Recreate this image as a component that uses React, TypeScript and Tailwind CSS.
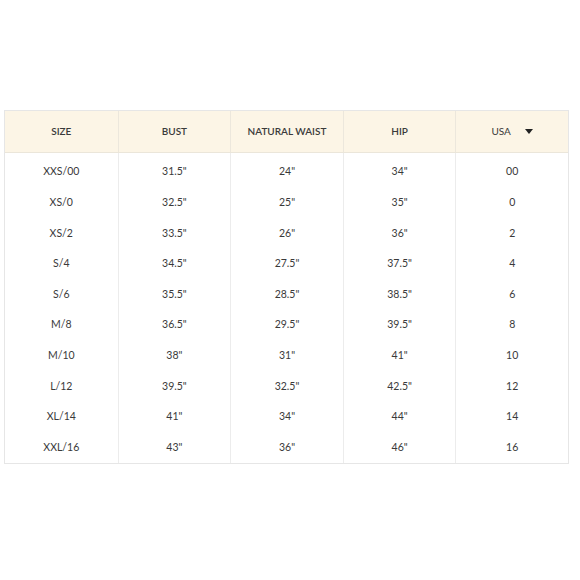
const rows = [
  ['XXS/00', '31.5"', '24"', '34"', '00'],
  ['XS/0', '32.5"', '25"', '35"', '0'],
  ['XS/2', '33.5"', '26"', '36"', '2'],
  ['S/4', '34.5"', '27.5"', '37.5"', '4'],
  ['S/6', '35.5"', '28.5"', '38.5"', '6'],
  ['M/8', '36.5"', '29.5"', '39.5"', '8'],
  ['M/10', '38"', '31"', '41"', '10'],
  ['L/12', '39.5"', '32.5"', '42.5"', '12'],
  ['XL/14', '41"', '34"', '44"', '14'],
  ['XXL/16', '43"', '36"', '46"', '16'],
]

const headers = ['SIZE', 'BUST', 'NATURAL WAIST', 'HIP']

export default function App() {
  return (
    <div className="w-[580px] h-[580px] bg-white pt-[110px] pl-[4px]" style={{ fontFamily: 'Lato, "Liberation Sans", sans-serif' }}>
      <div className="w-[565px] border border-[#e6e6e6] text-[#3a3a3a]">
        <div className="grid grid-cols-5 h-[42px] bg-[#fcf5e6] border-b border-[#ebe6da] text-[10px] font-semibold">
          {headers.map((h, i) => (
            <div key={h} className={`flex items-center justify-center ${i > 0 ? 'border-l border-[#ece7dc]' : ''}`}>
              {h}
            </div>
          ))}
          <div className="flex items-center justify-center gap-[14px] border-l border-[#ece7dc] font-normal">
            <span>USA</span>
            <svg width="8" height="5" viewBox="0 0 8 5">
              <path d="M0 0 L8 0 L4 5 Z" fill="#222" />
            </svg>
          </div>
        </div>
        <div className="grid grid-cols-5 text-[10.5px]">
          {[0, 1, 2, 3, 4].map(c => (
            <div key={c} className={`pt-[4px] ${c > 0 ? 'border-l border-[#ececec]' : ''}`}>
              {rows.map(r => (
                <div key={r[0]} className="h-[30.6px] flex items-center justify-center">
                  {r[c]}
                </div>
              ))}
            </div>
          ))}
        </div>
      </div>
    </div>
  )
}
